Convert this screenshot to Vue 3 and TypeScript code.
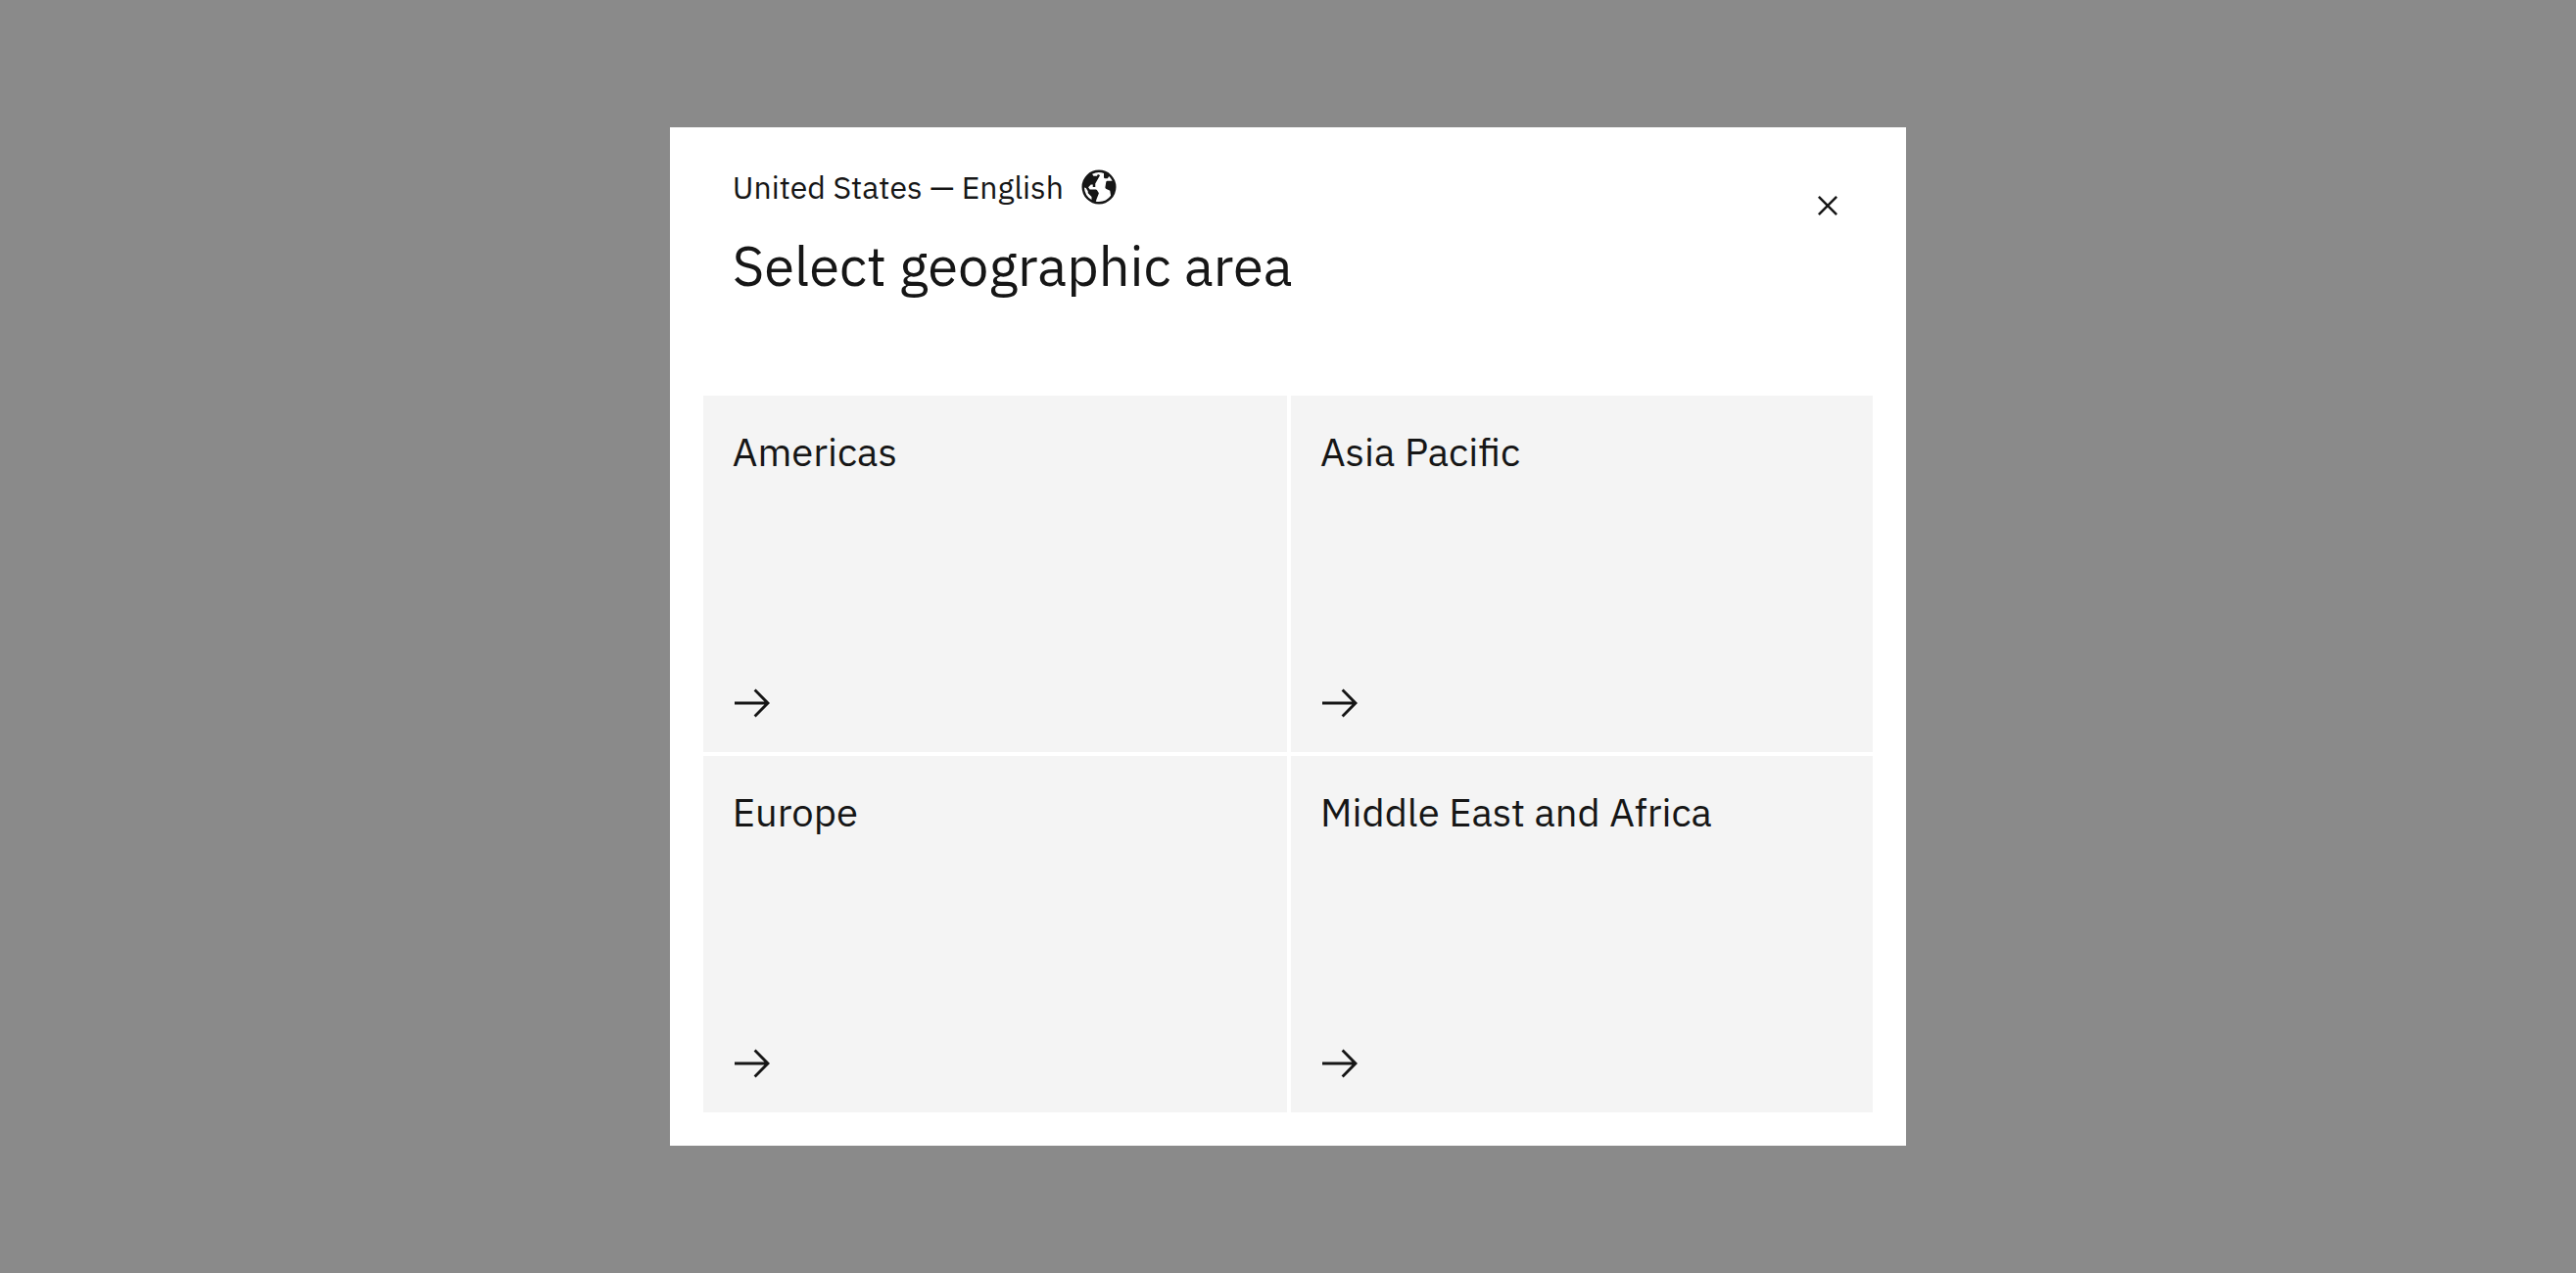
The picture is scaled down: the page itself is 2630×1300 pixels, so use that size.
<script setup lang="ts">
import { ref } from 'vue'

interface Region {
  id: string
  name: string
}

const open = ref(true)

const regions: Region[] = [
  { id: 'americas', name: 'Americas' },
  { id: 'asia-pacific', name: 'Asia Pacific' },
  { id: 'europe', name: 'Europe' },
  { id: 'mea', name: 'Middle East and Africa' },
]
</script>

<template>
  <main class="scrim">
    <section v-if="open" class="modal" role="dialog" aria-modal="true" aria-labelledby="modal-title">
      <header class="header">
        <div class="heading">
          <p class="locale">
            <span>United States — English</span>
            <svg class="icon" viewBox="0 0 32 32" aria-hidden="true">
              <path
                fill-rule="evenodd"
                d="M16,2A14,14,0,1,0,30,16,14.0158,14.0158,0,0,0,16,2ZM4.02,16.394l1.3384.4458L7,19.3027v1.2831a1,1,0,0,0,.2929.7071L10,24v2.3765A11.9941,11.9941,0,0,1,4.02,16.394ZM16,28a11.9682,11.9682,0,0,1-2.5718-.2847L14,26l1.8046-4.5116a1,1,0,0,0-.0964-.9261l-1.4113-2.117A1,1,0,0,0,13.4648,18h-4.93L7.2866,16.1274,9.4141,14H11v2h2V13.2656l3.8682-6.7695-1.7364-.9922L14.2769,7H11.5352L10.4492,5.3711A11.8612,11.8612,0,0,1,20,4.7V8a1,1,0,0,0,1,1h1.4648a1,1,0,0,0,.8321-.4453l.8769-1.3154A12.0331,12.0331,0,0,1,26.8945,11H22.82a1,1,0,0,0-.9806.8039l-.7221,4.4708a1,1,0,0,0,.54,1.0539L25,19l.6851,4.0557A11.9793,11.9793,0,0,1,16,28Z"
              />
            </svg>
          </p>
          <h1 id="modal-title" class="title">Select geographic area</h1>
        </div>
        <button class="close" type="button" aria-label="Close" @click="open = false">
          <svg class="icon" viewBox="0 0 32 32" aria-hidden="true">
            <path d="M17.4141 16 24 9.4141 22.5859 8 16 14.5859 9.4143 8 8 9.4141 14.5859 16 8 22.5859 9.4143 24 16 17.4141 22.5859 24 24 22.5859z" />
          </svg>
        </button>
      </header>
      <nav class="tiles" aria-label="Geographic areas">
        <a v-for="region in regions" :key="region.id" class="tile" :href="'#' + region.id">
          <span class="name">{{ region.name }}</span>
          <svg class="icon" viewBox="0 0 20 20" aria-hidden="true">
            <path d="M11.8 2.8 10.8 3.8 16.2 9.3 1 9.3 1 10.7 16.2 10.7 10.8 16.2 11.8 17.2 19 10z" />
          </svg>
        </a>
      </nav>
    </section>
  </main>
</template>

<style>
body {
  margin: 0;
  background: #8a8a8a;
}
</style>

<style scoped>
.scrim {
  box-sizing: border-box;
  min-height: 100vh;
  display: flex;
  align-items: center;
  justify-content: center;
  background: #8a8a8a;
  color: #161616;
  font-family: "IBM Plex Sans", Roboto, sans-serif;
}

.modal {
  box-sizing: border-box;
  display: flex;
  flex-direction: column;
  width: 48%;
  min-height: 80vh;
  padding: 0 34px 34px;
  background: #ffffff;
}

.header {
  display: flex;
  justify-content: space-between;
  align-items: flex-start;
  padding-bottom: 98px;
}

.heading {
  padding: 40px 0 0 30px;
}

.locale {
  display: flex;
  align-items: center;
  gap: 16px;
  margin: 0 0 24px;
  font-size: 32px;
  line-height: 42px;
}

.title {
  margin: 0;
  font-size: 56px;
  font-weight: 400;
  line-height: 70px;
}

.icon {
  display: block;
  flex: none;
  width: 40px;
  height: 40px;
  fill: #161616;
}

.close {
  display: flex;
  align-items: center;
  justify-content: center;
  width: 92px;
  height: 92px;
  margin-top: 34px;
  padding: 0;
  border: 0;
  background: transparent;
  cursor: pointer;
}

.close:focus-visible,
.tile:focus-visible {
  outline: 4px solid #0f62fe;
  outline-offset: -4px;
}

.tiles {
  flex: 1;
  display: grid;
  grid-template-columns: calc(50% - 1px) 1fr;
  grid-auto-rows: 1fr;
  gap: 4px;
}

.tile {
  display: flex;
  flex-direction: column;
  justify-content: space-between;
  padding: 30px;
  background: #f4f4f4;
  color: inherit;
  text-decoration: none;
}

.name {
  font-size: 40px;
  line-height: 54px;
}
</style>
